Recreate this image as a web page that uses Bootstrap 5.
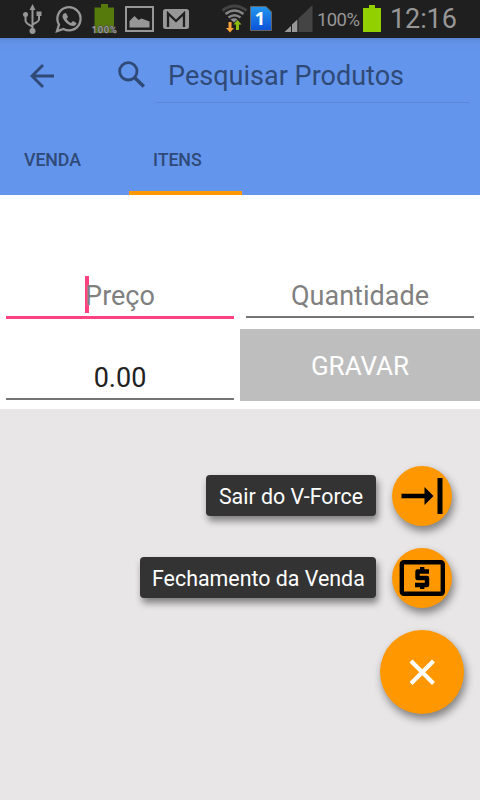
<!DOCTYPE html>
<html lang="pt-BR">
<head>
<meta charset="utf-8">
<meta name="viewport" content="width=device-width, initial-scale=1">
<title>V-Force</title>
<link href="https://cdn.jsdelivr.net/npm/bootstrap@5.3.0/dist/css/bootstrap.min.css" rel="stylesheet">
<style>
body { font-family: Roboto, "Noto Sans", sans-serif; background: #e8e6e7; width: 480px; height: 800px; overflow: hidden; }
svg { display: block; flex: none; }
.statusbar { height: 38px; background: #1f1f1f; color: #979797; padding-left: 23px; }
.status-pct { font-size: 18.5px; line-height: 38px; width: 42px; margin-left: 4px; padding-top: 1px; letter-spacing: -.6px; white-space: nowrap; }
.status-clock { font-size: 27px; line-height: 38px; margin-left: 9px; letter-spacing: -.1px; white-space: nowrap; }
.appbar { height: 157px; background: linear-gradient(#5680c9 0, #5f8de0 2px, #6192e7 5px, #6495ed 14px); color: #2f4a77; }
.toolbar { height: 84px; padding: 12px 11px 0 30px; }
.search-box { width: 313px; height: 53px; margin-left: 10px; padding-left: 12px; border-bottom: 1px solid #5a87d8; font-size: 27px; line-height: 52px; letter-spacing: .02px; white-space: nowrap; }
.tabs-row { height: 73px; }
.tab-link { padding: 0 24px; height: 73px; line-height: 75px; font-size: 17.8px; letter-spacing: -.1px; font-weight: 500; color: #2f4a77; border-bottom: 4px solid transparent; white-space: nowrap; text-decoration: none; }
.tab-link.active { border-color: #ff9800; width: 113px; }
.tab-first { width: 129px; }
.entry-panel { height: 214px; padding-top: 81px; font-size: 27px; }
.field { height: 43px; line-height: 40px; margin: 0 6px; color: #808080; text-align: center; }
.field span { display: block; height: 42px; border-bottom: 2px solid #757575; }
.field.focused span { height: 43px; border-bottom: 3px solid #ff4081; }
.field.amount { color: #212121; margin-top: 39px; }
.caret { display: inline-block; width: 4px; height: 37px; background: #ff4081; vertical-align: top; margin-right: -4px; }
.save-btn { height: 72px; margin-top: 10px; line-height: 74px; background: #bebebe; color: #fff; font-size: 26px; }
.fab-menu { padding-top: 57px; gap: 22px; }
.fab-row { gap: 16px; margin-right: 28px; }
.fab-label { height: 41px; margin-bottom: 1px; line-height: 44px; padding: 0 12px; font-size: 21.4px; color: #fff; background: #333; border-radius: 4px; box-shadow: 2px 5px 7px rgba(0,0,0,.45); text-align: center; white-space: nowrap; }
.label-exit { width: 170px; }
.label-close { width: 236px; }
.fab { width: 60px; height: 60px; background: #ff9800; box-shadow: 2px 5px 8px rgba(0,0,0,.45); }
.fab-main { width: 84px; height: 84px; margin-right: 16px; }
</style>
<script src="https://cdn.jsdelivr.net/npm/bootstrap@5.3.0/dist/js/bootstrap.bundle.min.js"></script>
</head>
<body>
<div class="statusbar d-flex align-items-start">
  <!-- USB, WhatsApp, battery monitor, gallery, mail -->
  <svg width="94" height="38" viewBox="23 0 94 38">
    <g fill="none" stroke="#979797" stroke-width="2"><path d="M32.5 8v23M25.500 15v5.500q0 3 7 6M39 15v4.500q0 2-6.500 5"/></g>
    <g fill="#979797"><path d="M29.500 10l3-6 3 6z"/><circle cx="32.500" cy="31" r="3"/><circle cx="25.500" cy="14.500" r="2.500"/><rect x="36.500" y="11.500" width="5" height="4.500"/></g>
    <path d="M57 31.200l2-6.500a11.600 11.600 0 1 1 4.500 4.300z" fill="none" stroke="#979797" stroke-width="2.300"/>
    <path d="M64 13.500l2-.5 2 4-1.500 2q2 3 4.500 4l2-2 3.500 2q-.5 3-3.500 3-3 0-7-3.500-3.500-4-3.500-6 0-2 1.500-3z" fill="#979797"/>
    <path d="M101 4h7v3.500h6V33H94.500V7.500h6.500z" fill="#567a0c"/>
    <text x="104.300" y="32.500" text-anchor="middle" font-size="9.500" font-weight="500" fill="#a2a2a2" stroke="#444" stroke-width="1.200" paint-order="stroke" textLength="25">100%</text>
  </svg>
  <svg width="72" height="38" viewBox="117 0 72 38">
    <rect x="126" y="7" width="27" height="24" fill="none" stroke="#979797" stroke-width="2"/>
    <path d="M129.500 27.500V21l5-5 4 4 3-1.500 8 3v6z" fill="#979797"/>
    <rect x="163" y="9" width="26" height="20" rx="2.500" fill="#979797"/>
    <path d="M168 27V13.500l8 7.500 8-7.500V27" fill="none" stroke="#1f1f1f" stroke-width="2.300"/>
  </svg>
  <!-- Wi-Fi, SIM, signal -->
  <svg width="124" height="38" viewBox="189 0 124 38">
    <path d="M222.500 10.500q12-9 24 0" fill="none" stroke="#444" stroke-width="3"/>
    <g fill="none" stroke="#858585" stroke-width="2.500"><path d="M225.500 14q9-7 18 0M228.500 17.500q6-4.500 12 0"/></g>
    <path d="M230.500 19.500q4-2.500 7 0l-3.500 3z" fill="#909090"/>
    <path d="M228.500 22h3v6h2.500l-4 4.500-4-4.500h2.500z" fill="#f9a13a"/>
    <path d="M236 30h3v-5.500h2.500l-4-4.500-4 4.500h2.500z" fill="#8cbe10"/>
    <defs><linearGradient id="simfill" x2="0" y2="1"><stop stop-color="#2498ef"/><stop offset="1" stop-color="#0b51d8"/></linearGradient></defs>
    <path d="M250.500 6.500h15.500l5.500 5.500v18.500h-21z" fill="url(#simfill)" stroke="#666"/>
    <text x="260" y="25" text-anchor="middle" font-family="Open Sans" font-size="18" font-weight="700" fill="#fff">1</text>
    <path d="M284.500 32L312.500 5v27z" fill="#444"/>
    <path d="M284.500 32l6.500-6v6zM292 32v-7.500l5.500-5V32z" fill="#979797"/>
    <path d="M291.500 25v7M298 19v13" stroke="#1f1f1f"/>
  </svg>
  <span class="status-pct">100%</span>
  <svg width="22" height="38" viewBox="0 0 22 38"><path d="M10 5h6v3h6v24H4V8h6z" fill="#92d000"/></svg>
  <span class="status-clock">12:16</span>
</div>

<header class="appbar">
  <div class="toolbar d-flex align-items-start">
    <svg width="24" height="53" viewBox="0 0 24 53"><path d="M24 26H2.500M13 15L2 26l11 11" fill="none" stroke="#2f4a77" stroke-width="2.900"/></svg>
    <svg class="ms-auto" width="28" height="53" viewBox="0 0 28 53"><circle cx="10.300" cy="21.300" r="8.700" fill="none" stroke="#2f4a77" stroke-width="2.800"/><path d="M16.500 27.500l9.300 9" stroke="#2f4a77" stroke-width="3.600"/></svg>
    <div class="search-box">Pesquisar Produtos</div>
  </div>
  <nav class="tabs-row d-flex">
    <a class="tab-link tab-first">VENDA</a>
    <a class="tab-link active">ITENS</a>
  </nav>
</header>

<main>
  <section class="entry-panel bg-white">
    <div class="row g-0">
      <div class="col-6">
        <div class="field focused"><span><i class="caret"></i>Preço</span></div>
        <div class="field amount"><span>0.00</span></div>
      </div>
      <div class="col-6">
        <div class="field"><span>Quantidade</span></div>
        <div class="save-btn text-center">GRAVAR</div>
      </div>
    </div>
  </section>
  <section class="fab-menu d-flex flex-column align-items-end">
    <div class="fab-row d-flex align-items-center">
      <div class="fab-label label-exit">Sair do V-Force</div>
      <div class="fab rounded-circle">
        <svg width="60" height="60" viewBox="0 0 60 60"><path d="M9.500 27.800h23v-6.800l9 9-9 9v-6.800h-23z"/><path d="M45.500 12h5v36h-5z"/></svg>
      </div>
    </div>
    <div class="fab-row d-flex align-items-center">
      <div class="fab-label label-close">Fechamento da Venda</div>
      <div class="fab rounded-circle">
        <svg width="60" height="60" viewBox="0 0 60 60"><rect x="9.800" y="14.200" width="41" height="31.600" rx="2" fill="none" stroke="#000" stroke-width="4.400"/><path d="M37 23.500H25.500v6.500h9.500v7H23M30.200 19v4M30.200 37v4" fill="none" stroke="#000" stroke-width="4.400" stroke-linejoin="round"/></svg>
      </div>
    </div>
    <div class="fab fab-main rounded-circle">
      <svg width="84" height="84" viewBox="0 0 84 84"><path d="M31 31l22.500 22.500M53.500 31L31 53.500" stroke="#fff" stroke-width="4.200"/></svg>
    </div>
  </section>
</main>
</body>
</html>
